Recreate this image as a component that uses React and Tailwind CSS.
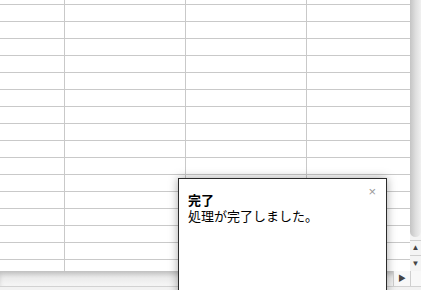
const ROWS = Array.from({ length: 15 });

function Row({ className = "h-[17px]" }) {
  return (
    <div className={`flex border-b border-[#c9c9c9] ${className}`}>
      <div className="w-[65px] shrink-0 border-r border-[#c9c9c9]" />
      <div className="w-[121px] shrink-0 border-r border-[#c9c9c9]" />
      <div className="w-[121px] shrink-0 border-r border-[#c9c9c9]" />
      <div className="flex-1" />
    </div>
  );
}

export default function App() {
  return (
    <div className="relative h-[290px] w-[421px] overflow-hidden bg-white font-['Liberation_Sans','Noto_Sans_CJK_JP',sans-serif]">
      <div className="flex h-[271px]">
        <div className="flex w-[410px] flex-col overflow-hidden bg-white">
          <Row className="h-[5px]" />
          {ROWS.map((_, i) => (
            <Row key={i} />
          ))}
          <div className="flex flex-1">
            <div className="w-[65px] shrink-0 border-r border-[#c9c9c9]" />
            <div className="w-[121px] shrink-0 border-r border-[#c9c9c9]" />
            <div className="w-[121px] shrink-0 border-r border-[#c9c9c9]" />
            <div className="flex-1" />
          </div>
        </div>
        <div className="flex w-[11px] flex-col bg-[#f4f4f4]">
          <div className="h-[237px] rounded-b-[6px] bg-gradient-to-r from-[#c4c4c4] via-[#dedede] to-[#f0f0f0]" />
          <div className="flex-1" />
          <div className="flex h-[15px] items-center justify-center border-t border-[#cfcfcf] text-[8px] leading-none text-[#444]">
            ▲
          </div>
          <div className="flex h-[16px] items-center justify-center border-t border-[#cfcfcf] text-[8px] leading-none text-[#444]">
            ▼
          </div>
        </div>
      </div>
      <div className="flex h-[16px] border-b border-[#d2d2d2] bg-gradient-to-b from-[#d9d9d9] via-[#ececec] to-[#f6f6f6] shadow-[inset_0_3px_4px_rgba(0,0,0,0.12)]">
        <div className="flex-1" />
        <div className="w-[15px] border-l border-[#bdbdbd]" />
        <div className="flex w-[17px] items-center justify-center border-l border-[#cfcfcf] bg-[#f8f8f8] text-[8px] leading-none text-[#444]">
          ▶
        </div>
        <div className="w-[11px] border-l border-[#cfcfcf] bg-[#f8f8f8]" />
      </div>
      <div className="flex h-[3px] bg-[#f2f2f2]">
        <div className="w-[260px] border-r border-[#cfcfcf]" />
      </div>

      <div className="absolute left-[178px] top-[178px] h-[140px] w-[209px] border-[1.5px] border-[#2b2b2b] bg-white shadow-[0_0_9px_rgba(0,0,0,0.35)]">
        <button className="absolute right-[10px] top-[6px] text-[13px] leading-none text-[#9a9a9a]">
          ×
        </button>
        <div className="px-[9px] pt-[14px] text-[13px] leading-[16px] text-black">
          <div className="font-bold">完了</div>
          <div>処理が完了しました。</div>
        </div>
      </div>
    </div>
  );
}
